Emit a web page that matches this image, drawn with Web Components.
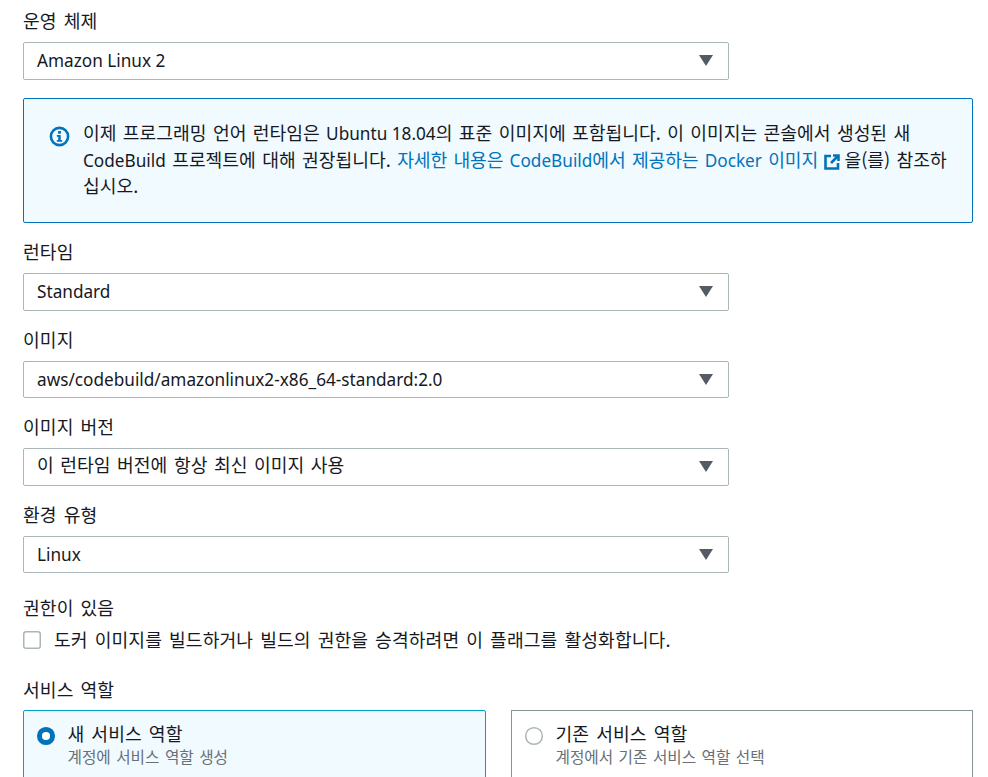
<!DOCTYPE html>
<html lang="ko">
<head>
<meta charset="utf-8">
<title>CodeBuild 환경</title>
<style>
  html, body { margin: 0; height: 777px; overflow: hidden; background: #fff; }
  body { font: 18.2px/22px "Noto Sans CJK KR", "Noto Sans", sans-serif; letter-spacing: .1px; word-spacing: 1.8px; color: #16191f; }
</style>
</head>
<body>
<env-form></env-form>

<template id="tpl-en"><style>:host { font-family: "Noto Sans", sans-serif; font-size: 17.2px; letter-spacing: 0; word-spacing: 0; }</style><slot></slot></template>

<template id="tpl-select">
  <style>
    :host { display: block; }
    .label { height: 22px; line-height: 18.5px; margin-bottom: 9px; }
    .box { box-sizing: border-box; width: 706px; height: 37.5px; border: 1px solid #aab7b8; border-radius: 2px; padding: 0 15px 1.5px 13px; display: flex; align-items: center; justify-content: space-between; letter-spacing: 0; word-spacing: 1.5px; background: #fff; }
    svg { display: block; margin-top: 1.5px; }
    /* el valor en coreano queda mas alto que el latino */
    :host([ko]) .box { padding-bottom: 5px; }
    :host([ko]) svg { margin-top: 5px; }
  </style>
  <div class="label"><slot name="label"></slot></div>
  <div class="box"><span><slot></slot></span>
    <svg width="14" height="11" viewBox="0 0 14 11"><path d="M0 0h14L7 11z" fill="#545b64"/></svg>
  </div>
</template>

<template id="tpl-alert">
  <style>
    :host { display: block; box-sizing: border-box; height: 124.5px; border: 1px solid #0073bb; border-radius: 2px; background: #f1faff; padding: 21px 10px 0 25px; }
    .row { display: flex; gap: 13px; }
    svg { flex: none; display: block; margin-top: 5.5px; }
    .text { line-height: 25.6px; letter-spacing: 0; word-spacing: 1.3px; }
  </style>
  <div class="row">
    <svg width="21" height="21" viewBox="0 0 21 21"><circle cx="10.5" cy="10.5" r="8.6" fill="none" stroke="#0073bb" stroke-width="2.6"/><rect x="9.1" y="5" width="2.8" height="2.8" fill="#0073bb"/><path d="M7.8 9h3.9v5H13.2v1.8H7.8V14h1.4v-3.2H7.8z" fill="#0073bb"/></svg>
    <div class="text"><slot></slot></div>
  </div>
</template>

<template id="tpl-ext"><style>
    :host { color: #0073bb; letter-spacing: -.1px; }
    a { color: inherit; text-decoration: none; }
    svg { vertical-align: -3px; margin: 0 4px 0 0; }
  </style><a href="#"><slot></slot><svg width="16" height="16" viewBox="0 0 16 16" fill="none" stroke="#0073bb" stroke-width="2.6"><path d="M7 2H1.5v12.5H14V9"/><path d="M9 1.5h5.5V7M14 2L7 9"/></svg></a></template>

<template id="tpl-check">
  <style>
    :host { display: block; }
    .label { height: 22px; margin-bottom: 10px; }
    .row { display: flex; gap: 13px; align-items: flex-start; }
    .box { flex: none; box-sizing: border-box; width: 18px; height: 18px; margin-top: 3px; box-shadow: inset 0 0 0 1.5px #aab7b8; border-radius: 3px; background: #fff; }
  </style>
  <div class="label"><slot name="label"></slot></div>
  <div class="row"><div class="box"></div><div><slot></slot></div></div>
</template>

<template id="tpl-tile">
  <style>
    :host { display: block; box-sizing: border-box; height: 90px; border: 1px solid #879596; background: #fff; padding: 11px 13px; }
    :host([selected]) { border-color: #00a1c9; background: #f1faff; border-radius: 2px; }
    .row { display: flex; gap: 13px; align-items: flex-start; }
    .radio { flex: none; box-sizing: border-box; width: 17.5px; height: 17.5px; margin-top: 5px; border-radius: 50%; box-shadow: inset 0 0 0 1.5px #aab7b8; background: #fff; }
    :host([selected]) .radio { box-shadow: none; border: 5.5px solid #0073bb; }
    .desc { font-size: 15.7px; line-height: 23px; margin-top: 1px; word-spacing: 1px; letter-spacing: 0; color: #687078; }
  </style>
  <div class="row"><div class="radio"></div>
    <div><div><slot></slot></div><div class="desc"><slot name="desc"></slot></div></div>
  </div>
</template>

<template id="tpl-form">
  <style>
    :host { display: block; padding: 11px 0 0 23px; width: 950px; }
    .alert { margin: 18.5px 0 19.5px; }
    .stack { display: flex; flex-direction: column; gap: 19px; }
    .perm { margin-top: 23px; }
    .role { margin-top: 28px; }
    .role .label { height: 22px; margin-bottom: 10px; }
    .tiles { display: grid; grid-template-columns: 463px 462px; column-gap: 25px; }
  </style>
  <env-select><span slot="label">운영 체제</span><en-t>Amazon Linux 2</en-t></env-select>
  <env-alert class="alert">이제 프로그래밍 언어 런타임은 <en-t>Ubuntu 18.04</en-t>의 표준 이미지에 포함됩니다. 이 이미지는 콘솔에서 생성된 새 <en-t>CodeBuild</en-t> 프로젝트에 대해 권장됩니다. <ext-link>자세한 내용은 <en-t>CodeBuild</en-t>에서 제공하는 <en-t>Docker</en-t> 이미지 </ext-link>을(를) 참조하<br>십시오.</env-alert>
  <div class="stack">
    <env-select><span slot="label">런타임</span><en-t>Standard</en-t></env-select>
    <env-select><span slot="label">이미지</span><en-t>aws/codebuild/amazonlinux2-x86_64-standard:2.0</en-t></env-select>
    <env-select ko><span slot="label">이미지 버전</span>이 런타임 버전에 항상 최신 이미지 사용</env-select>
    <env-select><span slot="label">환경 유형</span><en-t>Linux</en-t></env-select>
  </div>
  <env-check class="perm"><span slot="label">권한이 있음</span>도커 이미지를 빌드하거나 빌드의 권한을 승격하려면 이 플래그를 활성화합니다.</env-check>
  <div class="role">
    <div class="label">서비스 역할</div>
    <div class="tiles">
      <env-tile selected>새 서비스 역할<span slot="desc">계정에 서비스 역할 생성</span></env-tile>
      <env-tile>기존 서비스 역할<span slot="desc">계정에서 기존 서비스 역할 선택</span></env-tile>
    </div>
  </div>
</template>

<script>
  // Cada elemento clona su template en un shadow root abierto
  function definir(nombre, tplId) {
    customElements.define(nombre, class extends HTMLElement {
      constructor() {
        super();
        this.attachShadow({ mode: 'open' });
        this.shadowRoot.appendChild(document.getElementById(tplId).content.cloneNode(true));
      }
    });
  }
  definir('en-t', 'tpl-en');
  definir('env-select', 'tpl-select');
  definir('env-alert', 'tpl-alert');
  definir('ext-link', 'tpl-ext');
  definir('env-check', 'tpl-check');
  definir('env-tile', 'tpl-tile');
  definir('env-form', 'tpl-form');
</script>
</body>
</html>
